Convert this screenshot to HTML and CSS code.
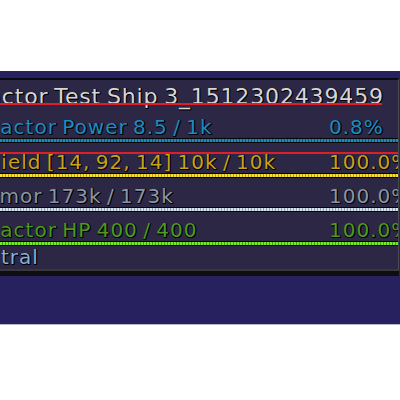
FILE: index.html
```html
<!DOCTYPE html>
<html>
<head>
<meta charset="utf-8">
<link rel="stylesheet" href="styles.css">
</head>
<body>
<div class="page">
  <div class="frame">
    <div class="panel">
      <div class="title"><span class="title-text">Reactor Test Ship 3_1512302439459</span></div>
      <div class="row power">
        <div class="line"><span class="label">Reactor Power 8.5 / 1k</span><span class="pct">0.8%</span></div>
        <div class="bar"></div>
      </div>
      <div class="row shield">
        <div class="divider"></div>
        <div class="line"><span class="label">Shield [14, 92, 14] 10k / 10k</span><span class="pct">100.0%</span></div>
        <div class="bar"></div>
      </div>
      <div class="row armor">
        <div class="line"><span class="label">Armor 173k / 173k</span><span class="pct">100.0%</span></div>
        <div class="bar"></div>
      </div>
      <div class="row hp">
        <div class="line"><span class="label">Reactor HP 400 / 400</span><span class="pct">100.0%</span></div>
        <div class="bar"></div>
      </div>
      <div class="row neutral">
        <div class="line"><span class="label">Neutral</span></div>
      </div>
    </div>
    <div class="edge"></div>
  </div>
</div>
</body>
</html>
```
FILE: styles.css
```css
html, body {
  margin: 0;
  padding: 0;
  background: #ffffff;
}
.page {
  padding-top: 71px;
  font-family: "DejaVu Sans", sans-serif;
  font-size: 20px;
  letter-spacing: 1px;
  word-spacing: -2px;
}
.frame {
  background: #27215f;
  padding: 7px 0 48px 0;
  border-bottom: 1px solid #b8b6c8;
}
.panel {
  background: #2b2745;
  border-top: 2px solid #0b0a14;
  border-right: 1px solid #4a4a52;
  border-bottom: 2px solid #3a3838;
  margin-right: 1px;
  padding: 9px 0 4px 0;
  overflow: hidden;
  text-shadow: 1px 1px 0 #000, 1px 0 0 #000, 0 1px 0 #000;
}
.edge {
  height: 5px;
  background: #0e0d12;
  margin-right: 1px;
}
.title {
  height: 16px;
  line-height: 16px;
  white-space: nowrap;
  color: #d6d6d6;
  font-size: 22px;
  letter-spacing: 0.85px;
  margin-left: -42px;
}
.title-text {
  position: relative;
  display: inline-block;
}
.title-text::after {
  content: "";
  position: absolute;
  left: 0;
  right: 2px;
  top: 14px;
  height: 2px;
  background: #e01e2a;
}
.line {
  display: grid;
  grid-template-columns: 329px auto;
  height: 16px;
  line-height: 16px;
  white-space: nowrap;
}
.label {
  display: block;
}
.pct {
  display: block;
}
.bar {
  height: 3px;
  border-top: 1px solid #05050a;
  border-bottom: 1px solid #05050a;
}
.power { margin-top: 14px; color: #1e8cc2; }
.power .label { margin-left: -27px; }
.power .bar {
  margin-top: 3px;
  background: repeating-linear-gradient(90deg, #1f8ab8 0 2px, #0f5577 2px 3px);
}
.shield { color: #c8a21a; }
.shield .divider {
  margin-top: 9px;
  height: 2px;
  background: #de1f2a;
}
.shield .label { margin-left: -26px; }
.shield .bar {
  margin-top: 3px;
  background: repeating-linear-gradient(90deg, #f4e03a 0 2px, #b89a10 2px 3px);
}
.armor { margin-top: 10px; color: #8a97a2; }
.armor .label { margin-left: -24px; }
.armor .bar {
  margin-top: 3px;
  background: repeating-linear-gradient(90deg, #d6e2ea 0 2px, #8fa2b0 2px 3px);
}
.hp { margin-top: 10px; color: #4c9a20; }
.hp .label { margin-left: -27px; }
.hp .bar {
  margin-top: 3px;
  background: repeating-linear-gradient(90deg, #78e82a 0 2px, #3ea012 2px 3px);
}
.neutral { margin-top: 3px; color: #7fb2da; }
.neutral .label { margin-left: -42px; }
```
